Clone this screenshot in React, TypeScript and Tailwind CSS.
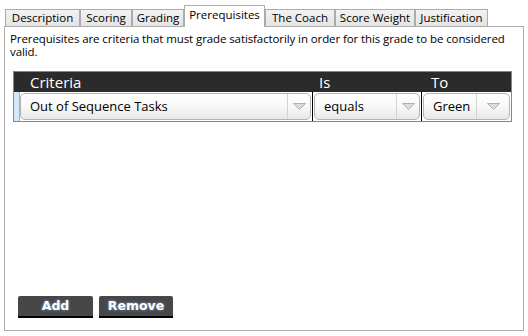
import React from 'react';

const tabs = [
    { label: 'Description', w: 'w-[75px]' },
    { label: 'Scoring', w: 'w-[52px]' },
    { label: 'Grading', w: 'w-[52px]' },
    { label: 'Prerequisites', w: 'w-[81px]', active: true },
    { label: 'The Coach', w: 'w-[70px]' },
    { label: 'Score Weight', w: 'w-[80px]' },
    { label: 'Justification', w: 'w-[73px]' },
];

const Arrow = () => (
    <svg width="13" height="7" viewBox="0 0 13 7">
        <path d="M0.5 0.5 L12.5 0.5 L6.5 6.5 Z" fill="#dcdcdc" stroke="#b0b0b0" strokeWidth="1" />
    </svg>
);

const Combo: React.FC<{ value: string; btn: string }> = ({ value, btn }) => (
    <div className="h-full flex rounded-[5px] border border-[#b4b4b4] bg-gradient-to-b from-white via-[#f8f8f8] to-[#e8e8e8]">
        <div className="flex-1 flex items-center pl-[9px] text-[13px] text-black">{value}</div>
        <div className={`${btn} border-l border-[#d2d2d2] flex items-center justify-center`}>
            <Arrow />
        </div>
    </div>
);

const DarkButton: React.FC<{ label: string; w: string }> = ({ label, w }) => (
    <button
        className={`${w} h-[22px] bg-[#474747] rounded-t-[2px] border-b-2 border-black text-white font-bold text-[12.5px] leading-none [text-shadow:0_0_3px_#7fa6d6] [font-family:'DejaVu_Sans',sans-serif]`}
    >
        {label}
    </button>
);

export default function App() {
    return (
        <div className="w-[528px] h-[336px] bg-white px-[4px] pt-[5px] [font-family:'Open_Sans','Noto_Sans',sans-serif] text-black">
            {/* Tabs */}
            <div className="flex items-end h-[21px] pl-[1px] relative z-10">
                {tabs.map(t => (
                    <div
                        key={t.label}
                        className={
                            t.active
                                ? `${t.w} h-[22px] -mb-px bg-white border border-b-0 border-[#acacac] flex items-center justify-center text-[11.5px] pb-[3px]`
                                : `${t.w} h-[17px] bg-gradient-to-b from-[#f2f2f2] to-[#e4e4e4] border border-b-0 border-[#acacac] flex items-center justify-center text-[11.5px]`
                        }
                    >
                        {t.label}
                    </div>
                ))}
            </div>

            {/* Panel */}
            <div className="h-[305px] border border-[#acacac] bg-white flex flex-col px-[5px]">
                <p className="pt-[5px] text-[11.5px] leading-[13px] tracking-[-0.1px]">
                    Prerequisites are criteria that must grade satisfactorily in order for this grade to be considered valid.
                </p>

                {/* Grid */}
                <div className="mt-[13px] ml-[3px] w-[499px] border border-[#6a8cb3] flex flex-col">
                    <div className="h-[20px] bg-[#2b2b2b] flex text-white text-[15px] leading-[20px]">
                        <div className="w-[6px]" />
                        <div className="w-[293px] pl-[10px]">Criteria</div>
                        <div className="w-[109px] pl-[6px]">Is</div>
                        <div className="flex-1 pl-[9px]">To</div>
                    </div>
                    <div className="h-[29px] flex">
                        <div className="w-[6px] bg-[#d4e8f9] border-r border-[#8fb4d8]" />
                        <div className="w-[293px] border-r border-black py-[1px] pr-[1px]">
                            <Combo value="Out of Sequence Tasks" btn="w-[23px]" />
                        </div>
                        <div className="w-[109px] border-r border-black p-[1px]">
                            <Combo value="equals" btn="w-[23px]" />
                        </div>
                        <div className="flex-1 p-[1px]">
                            <Combo value="Green" btn="w-[33px]" />
                        </div>
                    </div>
                </div>

                <div className="flex-1" />

                {/* Buttons */}
                <div className="flex gap-[6px] pl-[8px] pb-[12px]">
                    <DarkButton label="Add" w="w-[75px]" />
                    <DarkButton label="Remove" w="w-[74px]" />
                </div>
            </div>
        </div>
    );
}
